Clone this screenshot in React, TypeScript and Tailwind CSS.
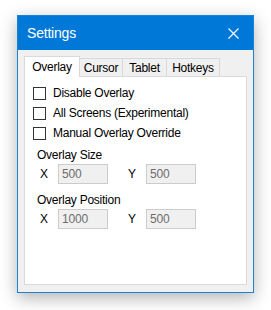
import React from "react";

const font = { fontFamily: '"Liberation Sans", Arial, sans-serif' };

function Check({ label }: { label: string }) {
  return (
    <div className="flex h-[20px] items-center">
      <div className="h-[13px] w-[13px] border border-[#333333] bg-white" />
      <span className="ml-[7px] text-[12px] leading-[16px] tracking-[-0.25px] text-black">{label}</span>
    </div>
  );
}

function Field({ value }: { value: string }) {
  return (
    <div className="flex h-[20px] w-[50px] items-center border border-[#cccccc] bg-[#f0f0f0] pl-[3px] text-[12px] leading-[16px] tracking-[-0.2px] text-[#6d6d6d]">
      {value}
    </div>
  );
}

function XYRow({ x, y }: { x: string; y: string }) {
  return (
    <div className="flex h-[20px] items-center">
      <span className="ml-[7px] w-[18px] text-[12px] leading-[16px]">X</span>
      <Field value={x} />
      <span className="ml-[20px] w-[18px] text-[12px] leading-[16px]">Y</span>
      <Field value={y} />
    </div>
  );
}

export default function App() {
  return (
    <div className="h-[310px] w-[271px] bg-white pl-[17px] pt-[15px]" style={font}>
      <div className="flex h-[278px] w-[237px] flex-col border border-[#1883d7] bg-[#f0f0f0] shadow-[0_5px_16px_rgba(0,0,0,0.3)]">
        <div className="flex h-[34px] items-center justify-between bg-[#0078d7] pl-[9px] pr-[14px]">
          <span className="text-[14px] tracking-[-0.2px] text-white">Settings</span>
          <svg width="11" height="11" viewBox="0 0 11 11">
            <path d="M0.5 0.5 L10.5 10.5 M10.5 0.5 L0.5 10.5" stroke="white" strokeWidth="1.1" />
          </svg>
        </div>
        <div className="flex flex-1 flex-col px-[6px] pb-[7px] pt-[6px]">
          <div className="relative z-10 -mb-px flex h-[21px] items-end text-[12px] leading-[16px] tracking-[-0.25px] text-black">
            <div className="flex h-[21px] w-[56px] items-center justify-center border border-b-0 border-[#d9d9d9] bg-white pb-[1px]">
              Overlay
            </div>
            <div className="flex h-[19px] w-[43px] items-center justify-center border-y border-r border-[#d9d9d9] bg-[#f0f0f0]">
              Cursor
            </div>
            <div className="flex h-[19px] w-[44px] items-center justify-center border-y border-r border-[#d9d9d9] bg-[#f0f0f0]">
              Tablet
            </div>
            <div className="flex h-[19px] w-[53px] items-center justify-center border-y border-r border-[#d9d9d9] bg-[#f0f0f0]">
              Hotkeys
            </div>
          </div>
          <div className="flex flex-1 flex-col border border-[#d9d9d9] bg-white pl-[8px] pt-[6px] text-black">
            <Check label="Disable Overlay" />
            <Check label="All Screens (Experimental)" />
            <Check label="Manual Overlay Override" />
            <div className="ml-[4px] mt-[4px] h-[16px] text-[12px] leading-[16px] tracking-[-0.25px]">Overlay Size</div>
            <div className="mt-[1px]">
              <XYRow x="500" y="500" />
            </div>
            <div className="ml-[4px] mt-[8px] h-[16px] text-[12px] leading-[16px] tracking-[-0.25px]">Overlay Position</div>
            <div className="mt-[1px]">
              <XYRow x="1000" y="500" />
            </div>
          </div>
        </div>
      </div>
    </div>
  );
}
